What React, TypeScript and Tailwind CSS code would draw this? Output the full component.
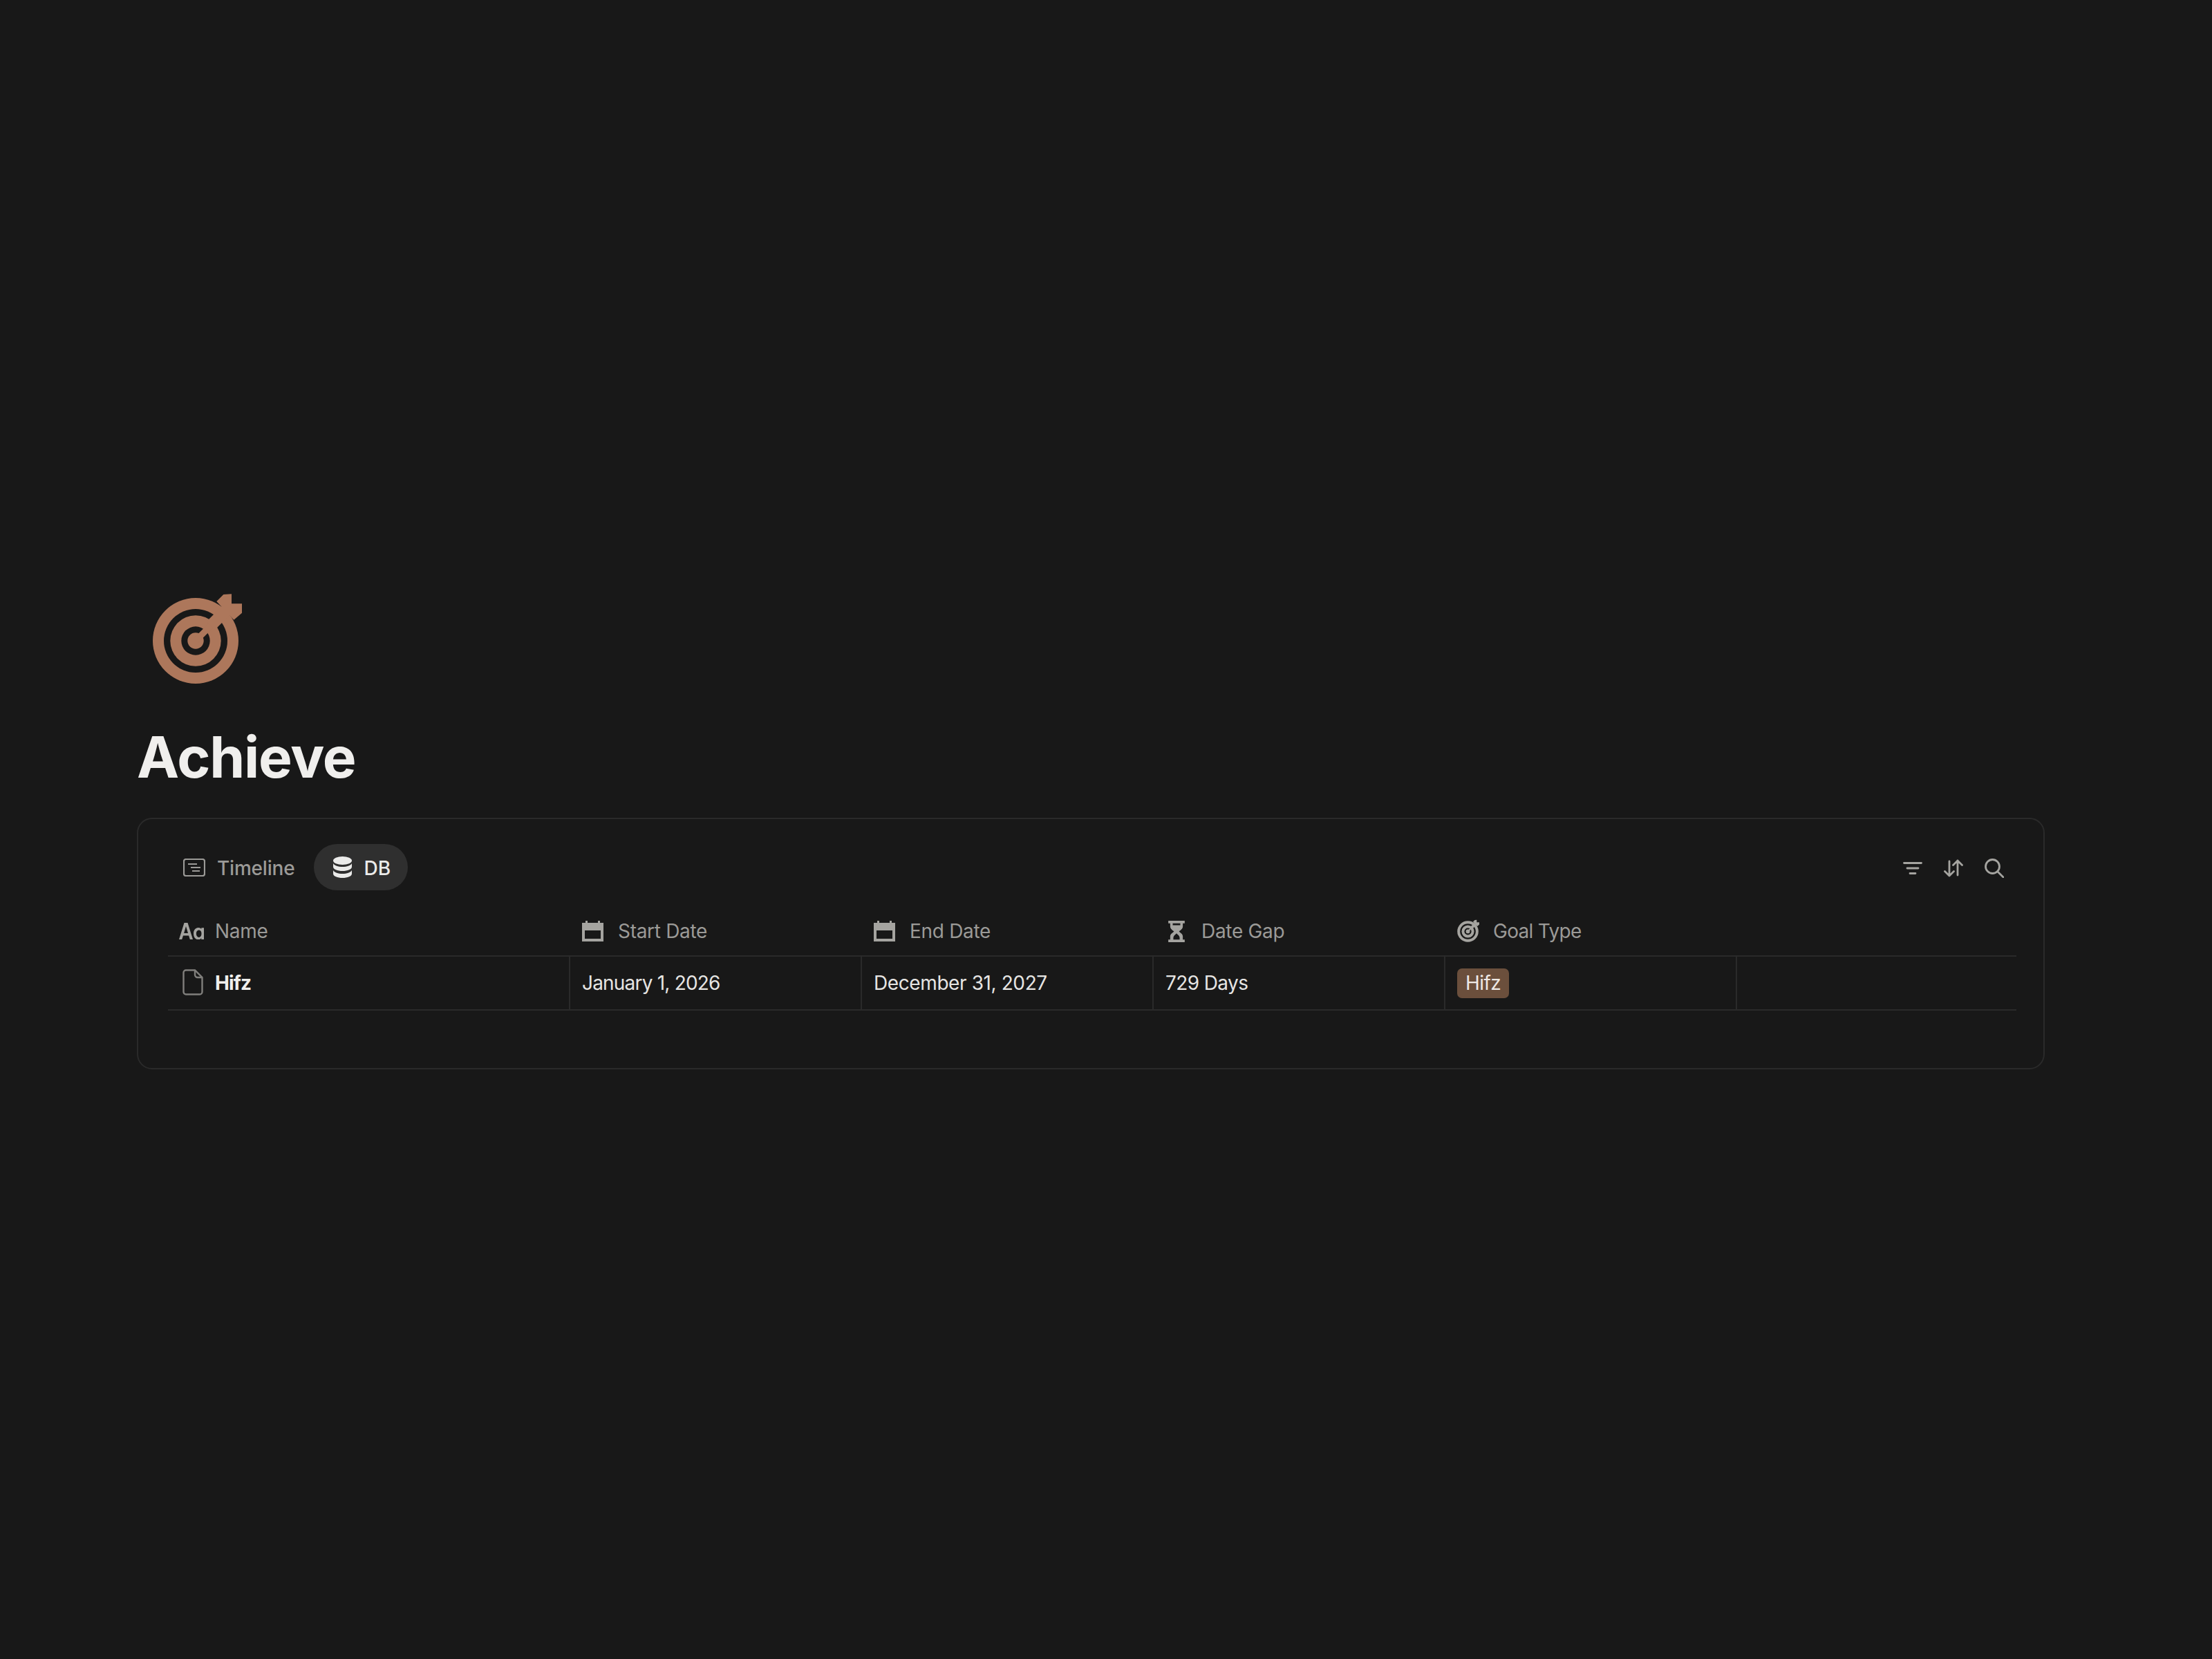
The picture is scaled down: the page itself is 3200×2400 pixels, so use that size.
import {ReactNode} from "react"

const TargetIcon = ({color, bg = "#181818", className}: {color: string; bg?: string; className: string}) => (
    <svg viewBox="0 0 132 134" className={className}>
        <circle cx="62" cy="71" r="62" fill={color} />
        <circle cx="62" cy="71" r="46" fill={bg} />
        <circle cx="62" cy="71" r="36.7" fill={color} />
        <circle cx="62" cy="71" r="20.7" fill={bg} />
        <circle cx="62" cy="71" r="11.7" fill={color} />
        <path d="M62 71L86 47" stroke={color} strokeWidth="9" />
        <path d="M84 49L106 27" stroke={color} strokeWidth="17" />
        <path d="M92.3 14L102.3 4L114 3.3V17.3H129V30.7L117.3 40.7Z" fill={color} />
    </svg>
)

const TimelineIcon = () => (
    <svg viewBox="0 0 32 26" className="w-[32px] h-[26px]" fill="none" stroke="#9b9a97" strokeWidth="2.200">
        <rect x="1" y="1" width="30" height="24" rx="3" />
        <path d="M7 8H20M11 13H25M13 18H24" />
    </svg>
)

const DbIcon = () => (
    <svg viewBox="0 0 27 31" className="w-[27px] h-[31px]" fill="#ebebea">
        <ellipse cx="13.5" cy="6" rx="13.5" ry="6" />
        <path d="M0 10c2 3.500 7 5 13.500 5S25 13.500 27 10v5c0 3.500-6 6-13.500 6S0 18.500 0 15Z" />
        <path d="M0 20c2 3.500 7 5 13.500 5S25 23.500 27 20v5c0 3.500-6 6-13.500 6S0 28.500 0 25Z" />
    </svg>
)

const CalendarIcon = () => (
    <svg viewBox="0 0 31 30" className="w-[31px] h-[30px] -mt-[2px]" fill="#a5a4a0">
        <path fillRule="evenodd" d="M5 0h3v3h15V0h3v3h5v27H0V3h5ZM4 14v12h23V14Z" />
    </svg>
)

const HourglassIcon = () => (
    <svg viewBox="0 0 26 34" className="w-[26px] h-[31px] ml-[3px] -mt-[1px]" fill="#a5a4a0">
        <path fillRule="evenodd" d="M0 0h26v4h-3v5c0 4-4 6-6 8 2 2 6 4 6 8v5h3v4H0v-4h3v-5c0-4 4-6 6-8-2-2-6-4-6-8V4H0ZM7 4v3h12V4ZM13 20c-2 2-5 4-5 7v3h10v-3c0-3-3-5-5-7Z" />
    </svg>
)

const AaIcon = () => (
    <svg viewBox="0 0 36 24" className="w-[36px] h-[24px] -mt-[2px]" fill="#a5a4a0">
        <path fillRule="evenodd" d="M7.500 0h5L20 24h-4.200l-1.700-5.500H6L4.200 24H0ZM7.100 15h5.900L10 5Z" />
        <path fillRule="evenodd" d="M28 7c2 0 3.500.8 4.300 2V7.300H36V24h-3.700v-2c-.8 1.400-2.400 2.300-4.300 2.300-4.400 0-7-3.600-7-8.700S23.600 7 28 7Zm.8 3.400c-2.500 0-3.900 2.100-3.900 5.200s1.400 5.300 3.900 5.300 3.700-2.200 3.700-5.300-1.200-5.200-3.700-5.200Z" />
    </svg>
)

const DocIcon = () => (
    <svg viewBox="0 0 30 38" className="w-[30px] h-[38px] -mt-[2px]" fill="none" stroke="#807f7c" strokeWidth="2.400">
        <path d="M5 1.500h13L28.500 12v21a3.500 3.500 0 0 1-3.500 3.500H5A3.500 3.500 0 0 1 1.500 33V5A3.500 3.500 0 0 1 5 1.500Z" />
        <path d="M18 1.500V8a4 4 0 0 0 4 4h6.500" />
    </svg>
)

const HeaderCell = ({icon, label, pad = "pl-[19px]", tracking = "tracking-[-0.3px]"}: {icon: ReactNode; label: string; pad?: string; tracking?: string}) => (
    <div className={`flex items-center ${pad} h-full`}>
        <div className="w-[52px] shrink-0 flex items-center">{icon}</div>
        <span className={`text-[28px] ${tracking} text-[#9b9a97] -mt-[1px]`}>{label}</span>
    </div>
)

export default function App() {
    return (
        <div className="w-[3200px] h-[2400px] bg-[#181818] pt-[856px] pl-[198px] font-['Inter',sans-serif]">
            <div className="ml-[23px] h-[134px]">
                <TargetIcon color="#ad775b" className="w-[132px] h-[134px]" />
            </div>
            <h1 className="mt-[56px] text-[82px] leading-[100px] tracking-[-1.2px] font-bold text-[#f0efed]">Achieve</h1>
            <div className="mt-[37px] w-[2760px] h-[364px] rounded-[22px] border-2 border-[#2a2a2a] pl-[43px] pr-[41px] pt-[36px]">
                <div className="flex items-center justify-between h-[67px]">
                    <div className="flex items-center">
                        <div className="flex items-center pl-[22px] gap-[17px] text-[28px] font-medium tracking-[-0.2px] text-[#9b9a97]">
                            <TimelineIcon />
                            <span className="pt-[2px]">Timeline</span>
                        </div>
                        <div className="ml-[28px] flex items-center h-[67px] rounded-full bg-[#2f2f2f] pl-[28px] pr-[25px] gap-[17px] text-[28px] font-medium text-[#ebebea]">
                            <DbIcon />
                            <span className="pt-[2px]">DB</span>
                        </div>
                    </div>
                    <div className="flex items-center gap-[31px] pr-[16px] pt-[3px]">
                        <svg viewBox="0 0 28 20" className="w-[28px] h-[20px]" fill="none" stroke="#a5a4a0" strokeWidth="2.800" strokeLinecap="round">
                            <path d="M1.500 2.500H26.500M6 10H22M10 17.500H18" />
                        </svg>
                        <svg viewBox="0 0 28 26" className="w-[28px] h-[26px]" fill="none" stroke="#a5a4a0" strokeWidth="2.800" strokeLinecap="round" strokeLinejoin="round">
                            <path d="M8 3V24M1.500 17.500L8 24L14.500 17.500M20 23V2M13.500 8.500L20 2L26.500 8.500" />
                        </svg>
                        <svg viewBox="0 0 28 28" className="w-[28px] h-[28px]" fill="none" stroke="#a5a4a0" strokeWidth="2.800" strokeLinecap="round">
                            <circle cx="11.500" cy="11.500" r="10" />
                            <path d="M19 19L27 27" />
                        </svg>
                    </div>
                </div>
                <div className="mt-[25px] grid grid-cols-[580px_422px_422px_422px_422px_406px] grid-rows-[71px_78px]">
                    <div className="border-b-2 border-[#2a2a2a]"><HeaderCell icon={<AaIcon />} label="Name" pad="pl-[16px]" /></div>
                    <div className="border-b-2 border-[#2a2a2a]"><HeaderCell icon={<CalendarIcon />} label="Start Date" /></div>
                    <div className="border-b-2 border-[#2a2a2a]"><HeaderCell icon={<CalendarIcon />} label="End Date" /></div>
                    <div className="border-b-2 border-[#2a2a2a]"><HeaderCell icon={<HourglassIcon />} label="Date Gap" /></div>
                    <div className="border-b-2 border-[#2a2a2a]"><HeaderCell icon={<TargetIcon color="#a5a4a0" className="w-[33px] h-[33px] -mt-[2px]" />} label="Goal Type" tracking="tracking-[-0.7px]" /></div>
                    <div className="border-b-2 border-[#2a2a2a]" />

                    <div className="border-b-2 border-[#2a2a2a] flex items-center pl-[21px]">
                        <div className="w-[47px] shrink-0"><DocIcon /></div>
                        <span className="text-[28px] font-bold tracking-[-0.9px] text-[#f0efed]">Hifz</span>
                    </div>
                    <div className="border-b-2 border-l-2 border-[#2a2a2a] flex items-center pl-[17px] text-[28px] tracking-[-0.8px] text-[#e6e5e3]">January 1, 2026</div>
                    <div className="border-b-2 border-l-2 border-[#2a2a2a] flex items-center pl-[17px] text-[28px] tracking-[-0.4px] text-[#e6e5e3]">December 31, 2027</div>
                    <div className="border-b-2 border-l-2 border-[#2a2a2a] flex items-center pl-[17px] text-[28px] tracking-[-0.6px] text-[#e6e5e3]">729 Days</div>
                    <div className="border-b-2 border-l-2 border-[#2a2a2a] flex items-center pl-[17px]">
                        <span className="rounded-[7px] bg-[#6b4f3c] px-[12px] h-[43px] flex items-center text-[28px] tracking-[-0.6px] text-[#eee9e5]">Hifz</span>
                    </div>
                    <div className="border-b-2 border-l-2 border-[#2a2a2a]" />
                </div>
            </div>
        </div>
    )
}
